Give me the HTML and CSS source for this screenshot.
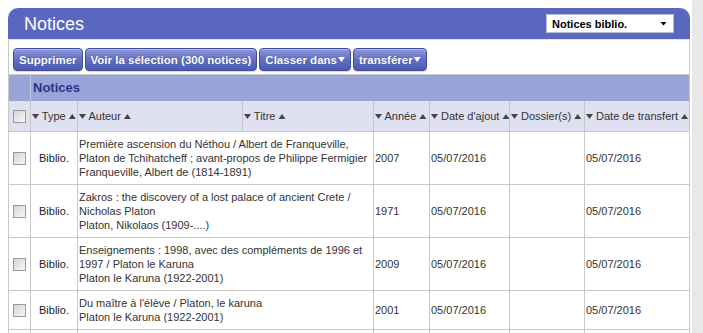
FILE: index.html
```html
<!DOCTYPE html>
<html>
<head>
	<title>Notices</title>
	<link rel="stylesheet" href="styles.css">
</head>
<body>
	<div class="page">

		<!-- Title bar with the record type selector -->
		<div class="titlebar">
			<h1>Notices</h1>
			<div class="select">Notices biblio. <span class="caret"></span></div>
		</div>

		<div class="panel">

			<!-- Actions on the selection -->
			<div class="actions">
				<button class="btn">Supprimer</button>
				<button class="btn">Voir la sélection (300 notices)</button>
				<button class="btn">Classer dans<span class="btn-caret"></span></button>
				<button class="btn">transférer <span class="btn-caret"></span></button>
			</div>

			<!-- Results table -->
			<table class="results">
				<colgroup>
					<col class="c-check">
					<col class="c-type">
					<col class="c-author">
					<col class="c-title">
					<col class="c-year">
					<col class="c-added">
					<col class="c-folder">
					<col class="c-transfer">
				</colgroup>
				<tr class="caption">
					<td></td>
					<td colspan="7">Notices</td>
				</tr>
				<tr class="heads">
					<th class="check"><input type="checkbox"></th>
					<th><span class="down"></span> Type <span class="up"></span></th>
					<th><span class="down"></span> Auteur <span class="up"></span></th>
					<th><span class="down"></span> Titre <span class="up"></span></th>
					<th><span class="down"></span> Année <span class="up"></span></th>
					<th><span class="down"></span> Date d'ajout <span class="up"></span></th>
					<th><span class="down"></span> Dossier(s) <span class="up"></span></th>
					<th><span class="down"></span> Date de transfert <span class="up"></span></th>
				</tr>
				<tr>
					<td class="check"><input type="checkbox"></td>
					<td class="type">Biblio.</td>
					<td colspan="2">
						<div>Première ascension du Néthou / Albert de Franqueville, Platon de Tchihatcheff ; avant-propos de Philippe Fermigier</div>
						<div>Franqueville, Albert de (1814-1891)</div>
					</td>
					<td>2007</td>
					<td>05/07/2016</td>
					<td></td>
					<td>05/07/2016</td>
				</tr>
				<tr>
					<td class="check"><input type="checkbox"></td>
					<td class="type">Biblio.</td>
					<td colspan="2">
						<div>Zakros : the discovery of a lost palace of ancient Crete / Nicholas Platon</div>
						<div>Platon, Nikolaos (1909-....)</div>
					</td>
					<td>1971</td>
					<td>05/07/2016</td>
					<td></td>
					<td>05/07/2016</td>
				</tr>
				<tr>
					<td class="check"><input type="checkbox"></td>
					<td class="type">Biblio.</td>
					<td colspan="2">
						<div>Enseignements : 1998, avec des compléments de 1996 et 1997 / Platon le Karuna</div>
						<div>Platon le Karuna (1922-2001)</div>
					</td>
					<td>2009</td>
					<td>05/07/2016</td>
					<td></td>
					<td>05/07/2016</td>
				</tr>
				<tr>
					<td class="check"><input type="checkbox"></td>
					<td class="type">Biblio.</td>
					<td colspan="2">
						<div>Du maître à l'élève / Platon, le karuna</div>
						<div>Platon le Karuna (1922-2001)</div>
					</td>
					<td>2001</td>
					<td>05/07/2016</td>
					<td></td>
					<td>05/07/2016</td>
				</tr>
				<tr>
					<td class="check"><input type="checkbox"></td>
					<td class="type">Biblio.</td>
					<td colspan="2">
						<div>La République / Platon</div>
						<div>Platon (0427?-0348? av. J.-C.)</div>
					</td>
					<td>2002</td>
					<td>05/07/2016</td>
					<td></td>
					<td>05/07/2016</td>
				</tr>
			</table>

		</div>
	</div>

	<!-- Window scroll track on the right -->
	<div class="scrolltrack"></div>
</body>
</html>
```

FILE: styles.css
```css
/* Page base */
body {
	margin: 8px;
	overflow: hidden;
	background-color: #fff;
	font-family: "Liberation Sans", Arial, sans-serif;
	font-size: 11px;
	color: #333;
}

.page {
	width: 682px;
}

/* Blue title bar */
.titlebar {
	height: 31px;
	padding: 0 16px;
	display: flex;
	align-items: center;
	justify-content: space-between;
	background-color: #5a67bf;
	border-radius: 10px 10px 0 0;
}

.titlebar h1 {
	margin: 0;
	font-size: 18px;
	font-weight: normal;
	line-height: 18px;
	color: #fff;
}

/* Record type selector */
.select {
	width: 128px;
	height: 19px;
	box-sizing: border-box;
	padding: 0 6px 0 5px;
	display: flex;
	align-items: center;
	justify-content: space-between;
	background-color: #fff;
	border: 1px solid #b9bdd6;
	font-size: 11px;
	font-weight: bold;
	color: #000;
}

.select .caret {
	width: 7px;
	height: 4px;
	background-color: #000;
	clip-path: polygon(0 0, 100% 0, 50% 100%);
}

/* White panel under the title bar */
.panel {
	border: 1px solid #c8c8c8;
	border-top-color: #e4e4e4;
	border-bottom: none;
	padding-top: 8px;
}

/* Action buttons */
.actions {
	display: flex;
	gap: 2px;
	padding: 0 4px 3px;
}

.btn {
	height: 23px;
	padding: 0 5px;
	display: flex;
	align-items: center;
	gap: 1px;
	font-family: "Liberation Sans", Arial, sans-serif;
	font-size: 11.5px;
	font-weight: bold;
	color: #fff;
	text-shadow: 0 0 1px #2d3a8a;
	background: linear-gradient(#8e98da, #6572c6 45%, #4d5ab3);
	border: 1px solid #3e4b9c;
	border-radius: 4px;
	box-shadow: inset 0 1px 0 rgba(255, 255, 255, 0.35), 0 1px 1px rgba(0, 0, 0, 0.15);
	cursor: pointer;
}

.btn-caret {
	width: 7px;
	height: 5px;
	background-color: #fff;
	clip-path: polygon(0 0, 100% 0, 50% 100%);
}

/* Results table */
.results {
	width: 100%;
	table-layout: fixed;
	border-collapse: separate;
	border-spacing: 0;
	border-top: 1px solid #c8c8c8;
}

.c-check { width: 22px; }
.c-type { width: 47px; }
.c-author { width: 165px; }
.c-title { width: 131px; }
.c-year { width: 56px; }
.c-added { width: 80px; }
.c-folder { width: 75px; }
.c-transfer { width: 104px; }

.results td,
.results th {
	padding: 5px 1px;
	line-height: 14px;
	text-align: left;
	vertical-align: middle;
	border-right: 1px solid #c8c8c8;
	border-bottom: 1px solid #c8c8c8;
}

.results td:last-child,
.results th:last-child {
	border-right: none;
}

/* "Notices" caption row */
.results .caption td {
	padding: 6px 2px;
	background-color: #99a4d8;
	border-bottom: none;
	border-right-color: #c3c8e6;
	font-size: 13px;
	font-weight: bold;
	color: #2a3592;
}

/* Sortable column heads */
.results .heads th {
	padding: 8px 1px;
	background-color: #dfe1f2;
	font-weight: normal;
	white-space: nowrap;
	color: #333;
}

.down, .up {
	display: inline-block;
	width: 7px;
	height: 5px;
	background-color: #444;
	vertical-align: 1px;
}

.down {
	clip-path: polygon(0 0, 100% 0, 50% 100%);
}

.up {
	clip-path: polygon(50% 0, 100% 100%, 0 100%);
}

.results .check {
	padding: 0;
	text-align: center;
}

.results .type {
	text-align: center;
	color: #222;
}

/* Checkboxes */
input[type="checkbox"] {
	appearance: none;
	display: block;
	width: 13px;
	height: 13px;
	margin: 0 auto;
	border: 1px solid #9a9a9a;
	background: linear-gradient(135deg, #d4d4d4, #f8f8f8);
}

/* Window scroll track */
.scrolltrack {
	position: fixed;
	top: 0;
	right: 0;
	width: 11px;
	height: 100%;
	background-color: #e8e8e8;
}
```
